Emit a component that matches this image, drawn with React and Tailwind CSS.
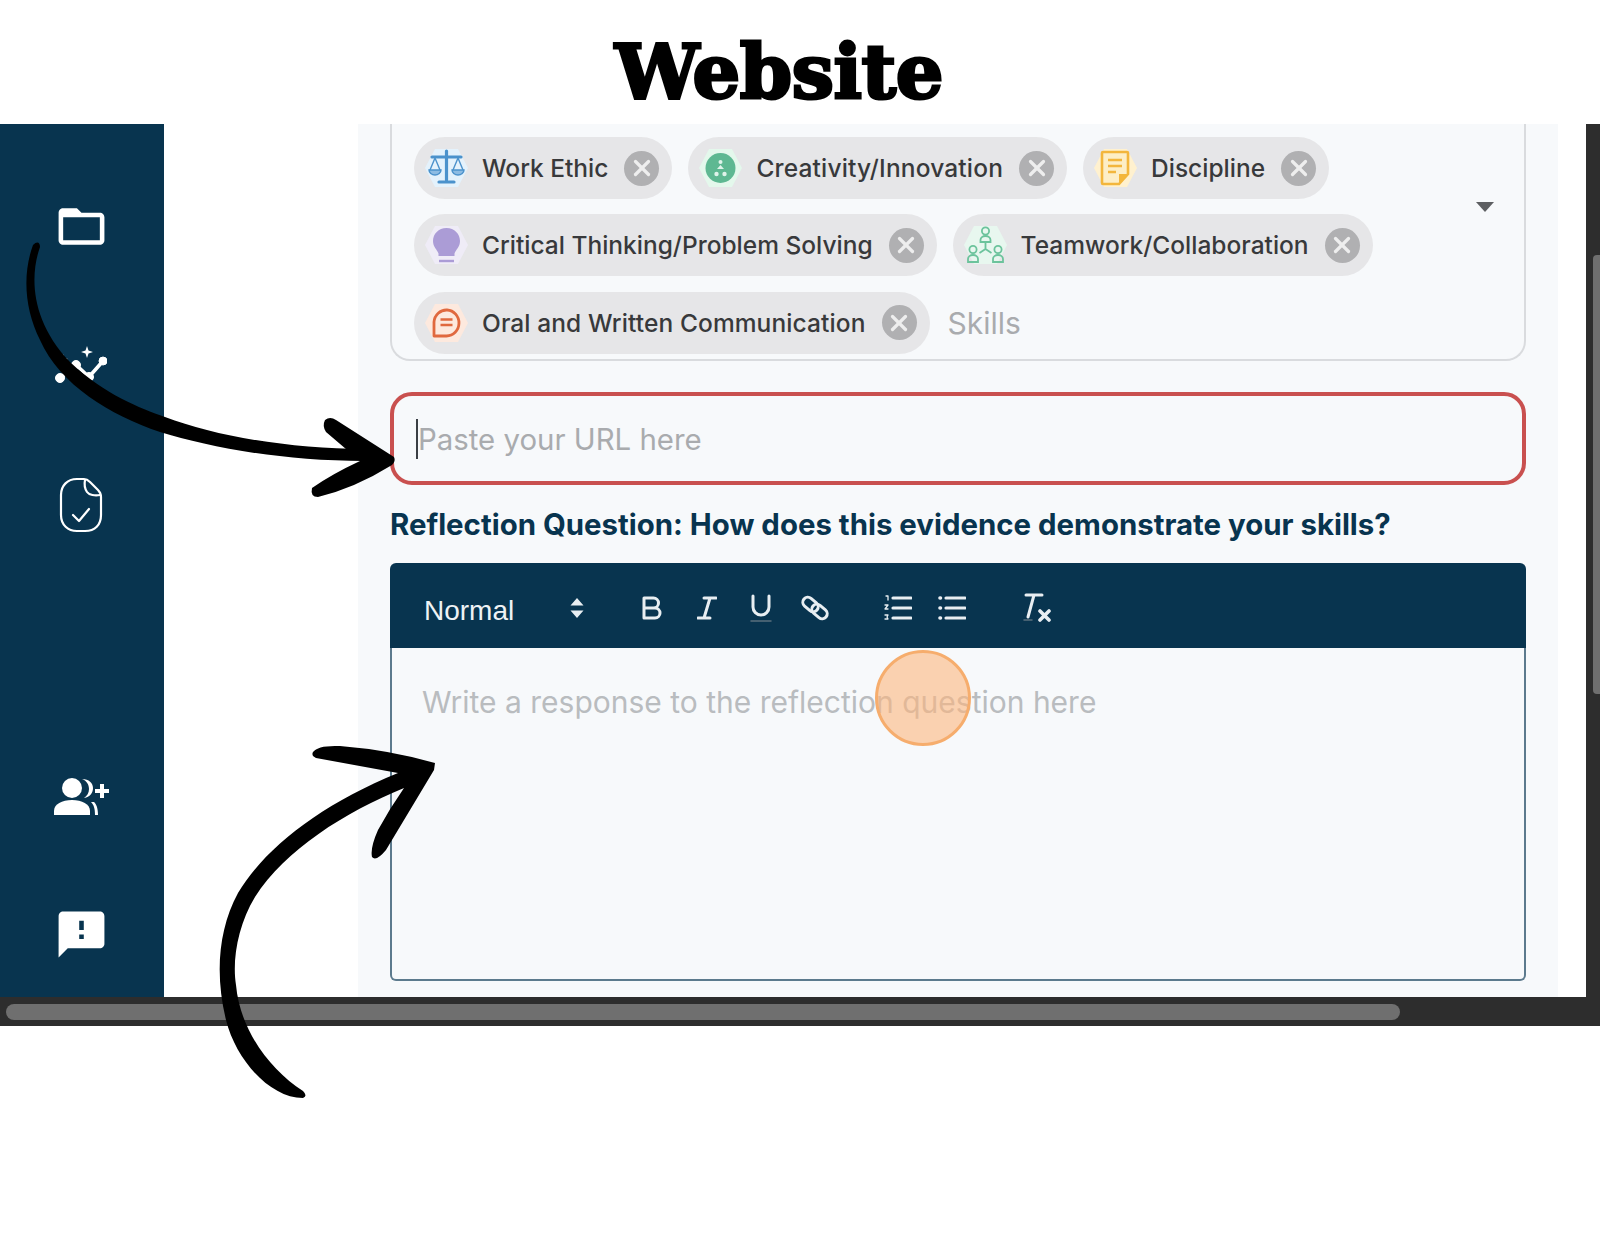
import { X } from "lucide-react";

const font = "[font-family:Inter,'Liberation_Sans',sans-serif]";

function Hex({ fill, children }) {
  return (
    <svg width="43" height="40" viewBox="0 0 43 40" className="shrink-0">
      <polygon points="0,20 10,1 33,1 43,20 33,39 10,39" fill={fill} />
      {children}
    </svg>
  );
}

function ScaleIcon() {
  return (
    <Hex fill="#e4f2fc">
      <g stroke="#4b92cc" fill="none" strokeWidth="2.2" strokeLinecap="round">
        <path d="M21.5 3v29M14 34h15M7 9h29" strokeWidth="3.2" />
        <path d="M10 10 5 22M10 10l5 12M33 10l-5 12M33 10l5 12" strokeWidth="1.4" />
        <path d="M4 22a6 5 0 0 0 12 0zM27 22a6 5 0 0 0 12 0z" fill="#8dbce3" strokeWidth="1.4" />
      </g>
    </Hex>
  );
}

function GreenIcon() {
  return (
    <Hex fill="#e4f8ec">
      <circle cx="21.5" cy="20" r="15" fill="#5eb892" />
      <g fill="#dff3ea">
        <circle cx="21.5" cy="14" r="2" />
        <path d="M18 21l3.500-4 3.500 4z" />
        <circle cx="17.500" cy="26" r="2.200" />
        <circle cx="25.500" cy="26" r="2.200" />
      </g>
    </Hex>
  );
}

function NoteIcon() {
  return (
    <Hex fill="#fff1cf">
      <path d="M9 4h24a1 1 0 0 1 1 1v21l-9 10H9a1 1 0 0 1-1-1V5a1 1 0 0 1 1-1z" fill="#fdeec6" stroke="#f3b63c" strokeWidth="2.600" />
      <path d="M14 12h14M14 18h14M14 24h8" stroke="#f3b63c" strokeWidth="2.400" fill="none" />
      <path d="M25 36v-10h9z" fill="#f3b63c" />
    </Hex>
  );
}

function BulbIcon() {
  return (
    <Hex fill="#efecf7">
      <path d="M21.500 3C13.500 3 8 9 8 16c0 6 4 8.500 5.500 12.500V31h16v-2.500C31 24.500 35 22 35 16 35 9 29.500 3 21.500 3z" fill="#ab9cd6" />
      <path d="M14 36h15" stroke="#ab9cd6" strokeWidth="2.400" />
    </Hex>
  );
}

function TeamIcon() {
  return (
    <Hex fill="#e8f7ef">
      <g stroke="#6cc39c" strokeWidth="1.800" fill="none">
        <circle cx="21.500" cy="6" r="3.600" />
        <path d="M16.500 17v-2a5 4 0 0 1 10 0v2z" />
        <circle cx="9" cy="24.500" r="3.600" />
        <path d="M4 37v-3a5 4 0 0 1 10 0v3z" />
        <circle cx="34" cy="24.500" r="3.600" />
        <path d="M29 37v-3a5 4 0 0 1 10 0v3z" />
        <path d="M21.500 18v6M21.500 24l-6 4M21.500 24l6 4" />
      </g>
    </Hex>
  );
}

function TalkIcon() {
  return (
    <Hex fill="#fde9de">
      <path d="M9 33V19a12.500 13 0 1 1 12.500 14z" fill="none" stroke="#e0693f" strokeWidth="2.800" strokeLinejoin="round" />
      <path d="M15.500 16.500h12M15.500 22h12" stroke="#e0693f" strokeWidth="2.400" />
    </Hex>
  );
}

function Chip({ icon, label, track = "" }) {
  return (
    <div className="flex h-[62px] items-center rounded-full bg-[#e6e6e8] pl-[11px] pr-[13px]">
      {icon}
      <span className={`ml-[14px] text-[24.5px] leading-none font-medium whitespace-nowrap text-[#38393b] ${track} ${font}`}>{label}</span>
      <span className="ml-[16px] flex h-[35px] w-[35px] shrink-0 items-center justify-center rounded-full bg-[#b0b0b2]">
        <X size={26} strokeWidth={3} className="text-[#eeeeee]" />
      </span>
    </div>
  );
}

function SideIcons() {
  return (
    <aside className="flex w-[164px] shrink-0 flex-col items-center bg-[#08344f] pt-[75px] pr-[2px]">
      <svg width="55" height="55" viewBox="0 0 24 24" fill="#fff" className="shrink-0">
        <path d="M20 6h-8l-2-2H4c-1.100 0-1.990.900-1.990 2L2 18c0 1.100.900 2 2 2h16c1.100 0 2-.900 2-2V8c0-1.100-.900-2-2-2zm0 12H4V8h16v10z" />
      </svg>
      <svg width="52" height="38" viewBox="0 0 52 38" className="mt-[92px] shrink-0" fill="#fff" stroke="#fff">
        <path d="M5 32 21 19l13 12 14-16" fill="none" strokeWidth="3.600" />
        <circle cx="5" cy="32" r="4.500" />
        <circle cx="21" cy="19" r="4.500" />
        <circle cx="34" cy="31" r="4.500" />
        <circle cx="48" cy="15" r="4" />
        <path d="M32 0l1.500 4.500L38 6l-4.500 1.500L32 12l-1.500-4.500L26 6l4.500-1.500z" strokeWidth="0" />
        <path d="M8 8l1.200 3.800L13 13l-3.800 1.200L8 18l-1.200-3.800L3 13l3.800-1.200z" strokeWidth="0" />
      </svg>
      <svg width="44" height="56" viewBox="0 0 44 56" fill="none" stroke="#fff" strokeWidth="2.200" className="mt-[93px] shrink-0" strokeLinecap="round" strokeLinejoin="round">
        <path d="M25 2h-7C8 2 2 9 2 18v20c0 10 7 16 16 16h8c10 0 16-6 16-16V20c0-3-1-5-3-7L31 5c-2-2-3-3-6-3z" />
        <path d="M26 3c-1 5 0 9 2 12s8 4 13 3" />
        <path d="m14 38 6 6 10-12" />
      </svg>
      <svg width="57" height="40" viewBox="0 0 57 40" fill="#fff" className="mt-[244px] shrink-0">
        <circle cx="19" cy="11" r="10" />
        <path d="M1 38v-4c0-7 8-11 18-11s18 4 18 11v4z" />
        <path d="M29 2c5 2 7 6 7 10s-2 7-5 9c6-1 9-5 9-10s-4-9-11-9zM41 25c2 2 4 5 4 13h-3c0-6-1-10-4-13z" />
        <path d="M47 7h4v5h5v4h-5v5h-4v-5h-5v-4h5z" />
      </svg>
      <svg width="55" height="55" viewBox="0 0 24 24" fill="#fff" className="mt-[90px] shrink-0">
        <path d="M20 2H4c-1.100 0-1.990.900-1.990 2L2 22l4-4h14c1.100 0 2-.900 2-2V4c0-1.100-.900-2-2-2zm-7 12h-2v-2h2v2zm0-4h-2V6h2v4z" />
      </svg>
    </aside>
  );
}

function Toolbar() {
  const stroke = { fill: "none", stroke: "#e8eef2", strokeWidth: 3, strokeLinecap: "round", strokeLinejoin: "round" };
  return (
    <div className="flex h-[85px] items-center rounded-t-[6px] bg-[#08344f] pl-[34px] text-[#eef2f5]">
      <span className="w-[145px] pt-[10px] text-[28px] leading-none [font-family:'Liberation_Sans',sans-serif]">Normal</span>
      <svg width="16" height="22" viewBox="0 0 16 22" fill="#e8eef2" className="mt-[5px]">
        <path d="M8 1l6.500 7.500h-13zM8 21l-6.500-7.500h13z" />
      </svg>
      <svg width="22" height="24" viewBox="0 0 22 24" {...stroke} className="mt-[5px] ml-[56px]">
        <path d="M3 2h9.500a5 5 0 0 1 0 10H3zM3 12h11a5 5 0 0 1 0 10H3z" />
      </svg>
      <svg width="20" height="24" viewBox="0 0 20 24" {...stroke} className="mt-[5px] ml-[34px]">
        <path d="M7 2h12M1 22h12M13 2 7 22" />
      </svg>
      <svg width="22" height="28" viewBox="0 0 22 28" {...stroke} className="mt-[5px] ml-[33px]">
        <path d="M3 2v11a8 8 0 0 0 16 0V2" />
        <path d="M1 27h20" stroke="#5a6f7d" strokeWidth="1.500" />
      </svg>
      <svg width="28" height="28" viewBox="0 0 28 28" {...stroke} className="mt-[5px] ml-[29px]">
        <rect x="1" y="5.500" width="17" height="10" rx="5" transform="rotate(40 9.500 10.500)" />
        <rect x="10" y="12.500" width="17" height="10" rx="5" transform="rotate(40 18.500 17.500)" />
      </svg>
      <svg width="28" height="26" viewBox="0 0 28 26" {...stroke} className="mt-[5px] ml-[55px]">
        <path d="M9 3h18M9 13h18M9 23h18" strokeWidth="3.200" />
        <path d="M2 1h2v4M1 10h3l-3 4h3M1 20h3l-1 2 1 2H1" strokeWidth="1.300" />
      </svg>
      <svg width="28" height="26" viewBox="0 0 28 26" {...stroke} className="mt-[5px] ml-[26px]">
        <path d="M8 3h19M8 13h19M8 23h19" strokeWidth="3.200" />
        <path d="M2 3h.5M2 13h.5M2 23h.5" strokeWidth="3.600" />
      </svg>
      <svg width="28" height="30" viewBox="0 0 28 30" {...stroke} className="mt-[5px] ml-[57px]">
        <path d="M3 2h16M11 2 5 24" />
        <path d="M1 27h8" stroke="#5a6f7d" strokeWidth="1.500" />
        <path d="m17 18 9 9M26 18l-9 9" strokeWidth="3.600" />
      </svg>
    </div>
  );
}

function Arrows() {
  return (
    <svg width="1600" height="1236" viewBox="0 0 1600 1236" fill="#000" className="pointer-events-none absolute top-0 left-0">
      <path d="M40 247C30 275 30 320 70 362c35 33 70 46 95 55 50 19 125 32 200 32v12c-85 0-155-14-205-29-50-17-100-47-120-92-15-30-18-65-7-95 4-4 7-3 7 2z" />
      <path d="M325 420q5-4 11 0l58 37q2 4-2 8-37 23-74 32-8 0-6-9 20-14 48-27l-34-29q-4-6-1-12z" />
      <path d="M313 752Q318 745 340 746Q390 750 435 763L434 770Q410 810 386 850Q376 862 372 857Q370 848 378 830Q390 808 404 788C345 812 285 850 255 897C238 925 232 960 236 985C240 1030 270 1070 303 1091Q308 1096 303 1098C270 1098 236 1060 226 1020C215 975 218 930 238 893C265 848 320 805 398 773L316 758Q311 756 313 752Z" />
    </svg>
  );
}

export default function App() {
  return (
    <div className="relative h-[1236px] w-[1600px] overflow-hidden bg-white">
      <header className="flex h-[124px] items-center pt-[20px] pl-[615px]">
        <h1 className="text-[75px] leading-none font-bold tracking-[-0.5px] text-black [-webkit-text-stroke:3px_black] [font-family:'DejaVu_Serif',serif]">Website</h1>
      </header>

      <div className="flex h-[873px]">
        <SideIcons />
        <div className="w-[194px] shrink-0 bg-white" />

        <main className="w-[1200px] shrink-0 overflow-hidden bg-[#f7f9fb] pl-[32px]">
          <section className="flex h-[237px] w-[1136px] rounded-b-[20px] border-x-2 border-b-2 border-[#d9dbde] pt-[13px] pl-[22px]">
            <div className="flex flex-1 flex-col gap-[15.4px]">
              <div className="flex gap-[16px]">
                <Chip icon={<ScaleIcon />} label="Work Ethic" />
                <Chip icon={<GreenIcon />} label="Creativity/Innovation" track="tracking-[0.16px]" />
                <Chip icon={<NoteIcon />} label="Discipline" />
              </div>
              <div className="flex gap-[16px]">
                <Chip icon={<BulbIcon />} label="Critical Thinking/Problem Solving" />
                <Chip icon={<TeamIcon />} label="Teamwork/Collaboration" />
              </div>
              <div className="flex items-center gap-[18px]">
                <Chip icon={<TalkIcon />} label="Oral and Written Communication" track="tracking-[0.1px]" />
                <span className={`text-[30px] leading-none text-[#a9abae] ${font}`}>Skills</span>
              </div>
            </div>
            <svg width="18" height="10" viewBox="0 0 18 10" fill="#5d5f62" className="mt-[65px] mr-[30px] shrink-0">
              <path d="M0 0h18L9 10z" />
            </svg>
          </section>

          <div className="mt-[31px] flex h-[93px] w-[1136px] items-center rounded-[22px] border-4 border-[#c9504f] pl-[22px]">
            <span className="h-[40px] w-[2px] bg-[#3a3f44]" />
            <span className={`pt-[2px] text-[29.4px] leading-none text-[#a9abae] ${font}`}>Paste your URL here</span>
          </div>

          <h2 className={`mt-[21px] mb-[19px] text-[29.4px] leading-[38px] font-bold whitespace-nowrap text-[#08344f] ${font}`}>
            Reflection Question: How does this evidence demonstrate your skills?
          </h2>

          <div className="relative h-[418px] w-[1136px]">
            <Toolbar />
            <div className="h-[333px] rounded-b-[6px] border-x-2 border-b-2 border-[#5c7a8d] pt-[36px] pl-[30px]">
              <p className={`text-[30px] leading-[36px] text-[#b9bcbf] ${font}`}>Write a response to the reflection question here</p>
            </div>
            <div className="absolute top-[87px] left-[485px] h-[96px] w-[96px] rounded-full border-[3px] border-[#f6ad6d] bg-[#fbb57e]/60" />
          </div>
        </main>

        <div className="w-[28px] shrink-0 bg-white" />
        <div className="flex w-[14px] shrink-0 flex-col bg-[#2d2d2d] pt-[131px] pl-[7px]">
          <div className="h-[439px] rounded-l-[4px] bg-[#6f6f6f]" />
        </div>
      </div>

      <div className="flex h-[29px] items-center bg-[#2d2d2d] pl-[6px]">
        <div className="h-[16px] w-[1394px] rounded-full bg-[#6f6f6f]" />
      </div>

      <Arrows />
    </div>
  );
}
